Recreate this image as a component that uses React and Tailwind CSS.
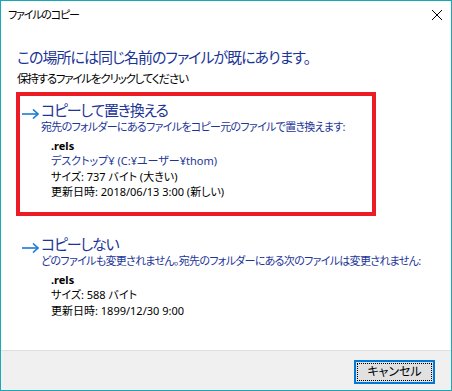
import React from 'react'

// Windows 10 "ファイルのコピー" conflict dialog

const FONT = "font-['Noto_Sans','Noto_Sans_CJK_JP',sans-serif] [font-feature-settings:'palt']"

const Arrow = () => (
  <svg width="17" height="10" viewBox="0 0 17 10" className="mt-[8px] shrink-0" fill="none">
    <line x1="0" y1="5" x2="16" y2="5" stroke="#1b7bd6" strokeWidth="1.6" />
    <polyline points="11,0.5 16,5 11,9.5" stroke="#1b7bd6" strokeWidth="1.6" />
  </svg>
)

function Option({ title, desc, lines, highlighted }) {
  return (
    <div
      className={`w-[360px] h-[124px] border-4 pt-[5px] pl-[2px] flex ${
        highlighted ? 'border-[#ec1c24]' : 'border-transparent'
      }`}
    >
      <Arrow />
      <div className="ml-[2px] flex flex-col">
        <div className="text-[15px] leading-[18px] tracking-[-1.2px] text-[#1c3597] whitespace-nowrap">{title}</div>
        <div className="text-[11px] leading-[16px] tracking-[-0.7px] text-[#1c3597] whitespace-nowrap">{desc}</div>
        <div className="mt-[3px] pl-[10px] text-[11px] leading-[15.5px] text-black whitespace-nowrap">
          <div className="font-bold">.rels</div>
          {lines.map((l, i) => (
            <div key={i} className={l.blue ? 'text-[#1c3597]' : ''}>
              {l.text}
            </div>
          ))}
        </div>
      </div>
    </div>
  )
}

export default function App() {
  return (
    <div className={`w-[452px] h-[391px] border border-[#1aa7b8] bg-white flex flex-col ${FONT}`}>
      {/* Title bar */}
      <div className="h-[30px] flex items-center justify-between pl-[7px] pr-[9px]">
        <span className="text-[11px] tracking-[-1.2px] text-black">ファイルのコピー</span>
        <svg width="10" height="10" viewBox="0 0 10 10">
          <line x1="0" y1="0" x2="10" y2="10" stroke="#000" strokeWidth="1" />
          <line x1="10" y1="0" x2="0" y2="10" stroke="#000" strokeWidth="1" />
        </svg>
      </div>

      {/* Content */}
      <div className="flex-1 pl-[15px] flex flex-col">
        <div className="mt-[17px] ml-[1px] text-[15px] leading-[20px] tracking-[-1px] text-[#1b3597]">
          この場所には同じ名前のファイルが既にあります。
        </div>
        <div className="mt-[4px] ml-[1px] text-[11.5px] leading-[16px] tracking-[-1.2px] text-black">
          保持するファイルをクリックしてください
        </div>

        <div className="mt-[5px]">
          <Option
            highlighted
            title="コピーして置き換える"
            desc="宛先のフォルダーにあるファイルをコピー元のファイルで置き換えます:"
            lines={[
              { text: 'デスクトップ¥ (C:¥ユーザー¥thom)', blue: true },
              { text: 'サイズ: 737 バイト (大きい)' },
              { text: '更新日時: 2018/06/13 3:00 (新しい)' },
            ]}
          />
        </div>
        <div className="mt-[10px]">
          <Option
            title="コピーしない"
            desc="どのファイルも変更されません。宛先のフォルダーにある次のファイルは変更されません:"
            lines={[
              { text: 'サイズ: 588 バイト' },
              { text: '更新日時: 1899/12/30 9:00' },
            ]}
          />
        </div>
      </div>

      {/* Footer */}
      <div className="h-[42px] border-t border-[#dfdfdf] bg-[#f0f0f0] flex justify-end items-start pt-[9px] pr-[16px]">
        <button className="w-[81px] h-[24px] border-2 border-[#0078d7] bg-[#e1e1e1] p-[1px]">
          <div className="h-full w-full border border-dotted border-black flex items-center justify-center text-[12px] text-black">
            キャンセル
          </div>
        </button>
      </div>
    </div>
  )
}
